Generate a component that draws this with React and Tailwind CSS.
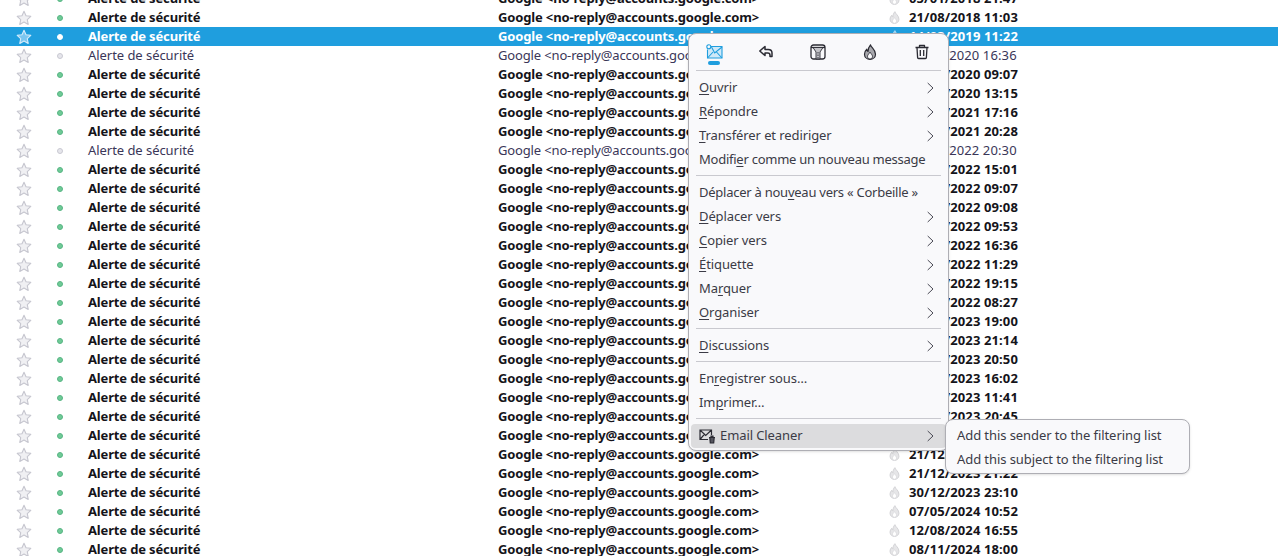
import React from "react";

const dates = [
  ["05/01/2018 21:47", 1],["21/08/2018 11:03", 1],["14/03/2019 11:22", 1],["02/03/2020 16:36", 0],
  ["03/04/2020 09:07", 1],["21/09/2020 13:15", 1],["14/02/2021 17:16", 1],["18/06/2021 20:28", 1],
  ["11/01/2022 20:30", 0],["12/01/2022 15:01", 1],["15/02/2022 09:07", 1],["15/02/2022 09:08", 1],
  ["15/02/2022 09:53", 1],["21/03/2022 16:36", 1],["04/05/2022 11:29", 1],["12/07/2022 19:15", 1],
  ["08/09/2022 08:27", 1],["11/01/2023 19:00", 1],["23/02/2023 21:14", 1],["15/03/2023 20:50", 1],
  ["03/05/2023 16:02", 1],["17/06/2023 11:41", 1],["22/08/2023 20:45", 1],["21/12/2023 21:20", 1],
  ["21/12/2023 21:21", 1],["21/12/2023 21:22", 1],["30/12/2023 23:10", 1],["07/05/2024 10:52", 1],
  ["12/08/2024 16:55", 1],["08/11/2024 18:00", 1],
];

function Star({ selected }) {
  return (
    <svg width="16" height="16" viewBox="0 0 16 16">
      <path d="M8 1.300l2 4.400 4.800.6-3.500 3.300.9 4.800L8 12.100l-4.200 2.300.9-4.800L1.200 6.300l4.800-.6z"
        fill={selected ? "#7cc6f0" : "#f0f0f3"} stroke={selected ? "#d5ecfa" : "#c6c6cf"} strokeWidth="1.100" strokeLinejoin="round" />
    </svg>
  );
}

const FLAME_OUTER = "M8.500.8C9 3.500 13.500 5.500 13.500 10.200 13.500 13.300 11 15.300 8 15.300S2.500 13.300 2.500 10.200c0-2.200 1-3.800 2.300-5 .1 1.200.5 1.900 1.200 2.300C6 5 6.800 2.800 8.500.8z";
const FLAME_INNER = "M8 15c-1.500 0-2.500-1.100-2.500-2.600 0-1.400 1.300-2.300 2.500-4.300 1.200 2 2.500 2.900 2.500 4.300 0 1.500-1 2.600-2.500 2.600z";

function Flame({ selected }) {
  return (
    <svg width="13" height="15" viewBox="0 0 16 16" strokeLinejoin="round">
      <path d={FLAME_OUTER} fill={selected ? "#8ccdf0" : "#e6e6e8"} stroke={selected ? "#bfe3f7" : "#cdcdd0"} strokeWidth="1" />
      <path d={FLAME_INNER} fill={selected ? "#1f9ede" : "#ffffff"} stroke={selected ? "#bfe3f7" : "#d6d6d9"} strokeWidth=".8" />
    </svg>
  );
}

function Row({ date, unread, selected }) {
  const dotClass = selected
    ? "bg-white border-white"
    : unread
    ? "bg-[#6fcb97] border-[#58b584]"
    : "bg-[#e6e6ec] border-[#c9c9d2]";
  const text = selected ? "text-white font-bold" : unread ? "text-[#15141a] font-bold" : "text-[#3a3658] font-normal";
  const tight = unread || selected;
  return (
    <div className={`grid h-[19px] grid-cols-[48px_24px_426px_390px_21px_1fr] items-center text-[13px] leading-[19px] ${selected ? "bg-[#1f9ede]" : ""} ${text}`}>
      <div className="flex justify-center"><Star selected={selected} /></div>
      <div className="flex justify-center"><span className={`h-[6px] w-[6px] rounded-full border ${dotClass}`} /></div>
      <div className={`pl-4 ${tight ? "tracking-[-0.15px]" : "tracking-[-0.05px]"}`}>Alerte de sécurité</div>
      <div className="tracking-[-0.15px]">{"Google <no-reply@accounts.google.com>"}</div>
      <div className="flex"><Flame selected={selected} /></div>
      <div className="tracking-[0.12px]">{date}</div>
    </div>
  );
}

function Chevron() {
  return (
    <svg width="7" height="12" viewBox="0 0 7 12" fill="none" stroke="#4a4a55" strokeWidth="1">
      <path d="M.7 1l5.300 5-5.300 5" />
    </svg>
  );
}

function Item({ pre = "", u = "", post = "", arrow, tight }) {
  return (
    <div className="flex h-6 items-center justify-between pl-[10px] pr-[14px]">
      <span className={tight ? "tracking-[-0.25px]" : "tracking-[-0.1px]"}>
        {pre}<span className="underline underline-offset-2">{u}</span>{post}
      </span>
      {arrow && <Chevron />}
    </div>
  );
}

const Sep = () => <div className="mx-[7px] mb-[5px] mt-[3px] h-px bg-[#c9c9cf]" />;

function ToolIcon({ children }) {
  return <div className="flex w-[52px] shrink-0 flex-col items-center">{children}</div>;
}

function MailIcon() {
  return (
    <svg width="17" height="16" viewBox="0 0 17 16" fill="none" stroke="#1f9ede" strokeWidth="1.100">
      <path d="M5 2.500h11v11.500H1.500V5.500" fill="#cfe9f8" />
      <path d="M1.500 14l5.500-6M16 14l-5.500-6M5.500 3L8.700 9 16 3" />
      <circle cx="2.800" cy="2.800" r="2" fill="#f9f9fb" />
    </svg>
  );
}

export default function App() {
  return (
    <div className="relative h-screen overflow-hidden bg-white font-['Noto_Sans',sans-serif]">
      <div className="mt-[-11px]">
        {dates.map(([d, u], i) => <Row key={i} date={d} unread={!!u} selected={i === 2} />)}
      </div>

      <div className="absolute left-[688px] top-[33px] w-[261px] rounded-lg border border-[#aeaeb4] bg-[#f9f9fb] text-[13px] text-[#3b3b46] shadow-sm">
        <div className="-ml-px flex h-9 items-start pt-[10px]">
          <ToolIcon>
            <MailIcon />
            <div className="mt-px h-[4px] w-[12px] rounded-sm bg-[#1f9ede]" />
          </ToolIcon>
          <ToolIcon>
            <svg width="16" height="16" viewBox="0 0 16 16" fill="none" stroke="#2b2b33" strokeWidth="1.500" strokeLinejoin="round">
              <path d="M7 2.500L1.800 7 7 11.500V9h2.800c1.500 0 2.200.9 2.200 2.200v1.300h2V9c0-2.300-1.500-3.500-3.800-3.500H7z" />
            </svg>
          </ToolIcon>
          <ToolIcon>
            <svg width="16" height="16" viewBox="0 0 16 16" fill="none" stroke="#2b2b33" strokeWidth="1.300" strokeLinejoin="round">
              <rect x="1" y="1" width="14" height="14" rx="2.500" />
              <path d="M1 3.500h14" />
              <path d="M3 3.500h10L10 8v7H6V8z" fill="#c4c4c9" strokeWidth=".9" />
              <path d="M8 8v7" strokeWidth=".9" strokeDasharray="1.500 1" />
            </svg>
          </ToolIcon>
          <ToolIcon>
            <svg width="16" height="16" viewBox="0 0 16 16" stroke="#2b2b33" strokeWidth="1.200" strokeLinejoin="round">
              <path d={FLAME_OUTER} fill="#a8a8ad" />
              <path d={FLAME_INNER} fill="#f9f9fb" strokeWidth=".9" />
            </svg>
          </ToolIcon>
          <ToolIcon>
            <svg width="16" height="16" viewBox="0 0 16 16" fill="none" stroke="#2b2b33" strokeWidth="1.300" strokeLinejoin="round">
              <path d="M1.500 3.500h13M5.500 3.500V1.500h5v2M3 3.500l.6 10c0 .6.500 1 1 1h6.800c.5 0 1-.4 1-1l.6-10M6.300 6v6M9.700 6v6" />
            </svg>
          </ToolIcon>
        </div>
        <div className="mx-[7px] h-px bg-[#c9c9cf]" />
        <div className="pt-[5px] pb-[2px]">
          <Item u="O" post="uvrir" arrow />
          <Item u="R" post="épondre" arrow />
          <Item u="T" post="ransférer et rediriger" arrow />
          <Item pre="Modifi" u="e" post="r comme un nouveau message" tight />
          <Sep />
          <Item pre="Déplacer à nou" u="v" post="eau vers « Corbeille »" tight />
          <Item u="D" post="éplacer vers" arrow />
          <Item u="C" post="opier vers" arrow />
          <Item u="É" post="tiquette" arrow />
          <Item pre="Ma" u="r" post="quer" arrow />
          <Item u="O" post="rganiser" arrow />
          <Sep />
          <Item u="D" post="iscussions" arrow />
          <Sep />
          <Item pre="En" u="r" post="egistrer sous…" />
          <Item pre="Im" u="p" post="rimer…" />
          <Sep />
          <div className="mx-[2px] flex h-6 items-center justify-between rounded bg-[#dcdcde] pl-[8px] pr-[12px]">
            <span className="flex items-center gap-[4px] tracking-[-0.1px]">
              <svg width="17" height="16" viewBox="0 0 17 16" fill="none" stroke="#2b2b33" strokeWidth="1.200">
                <path d="M9 11.500H1v-9.500h11.500V7M1 2l5.700 5.500L12.500 2M1 11.500L5.300 6.300" />
                <path d="M10 9.500h6M10.800 9.500l.5 5.500h3.400l.5-5.500M12 9.500V8h2v1.500" fill="#55555e" />
              </svg>
              Email Cleaner
            </span>
            <Chevron />
          </div>
        </div>
      </div>

      <div className="absolute left-[945px] top-[419px] w-[245px] rounded-lg border border-[#aeaeb4] bg-[#f9f9fb] pb-[1px] pl-[11px] pt-[4px] text-[13px] tracking-[-0.08px] text-[#3b3b46] shadow-sm">
        <div className="flex h-6 items-center">Add this sender to the filtering list</div>
        <div className="flex h-6 items-center">Add this subject to the filtering list</div>
      </div>
    </div>
  );
}
